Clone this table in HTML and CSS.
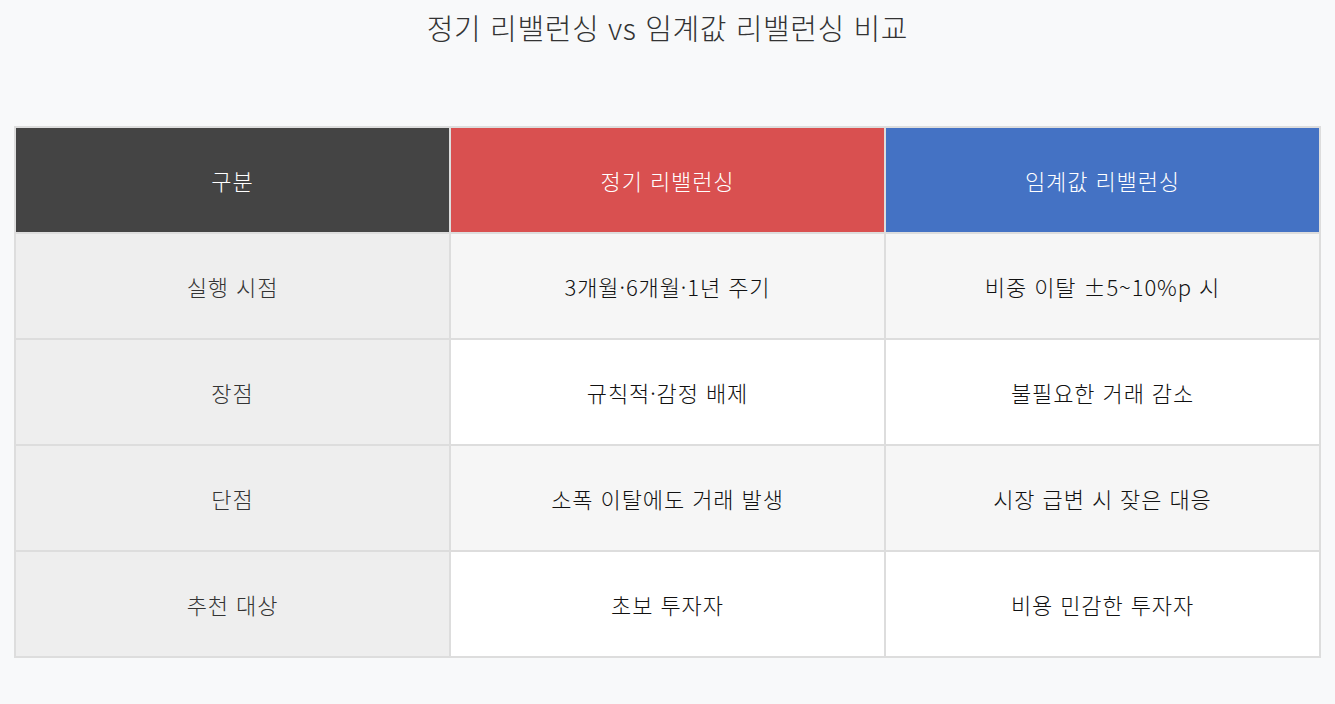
FILE: index.html
```html
<!DOCTYPE html>
<html lang="ko">
<head>
<meta charset="utf-8">
<link rel="stylesheet" href="styles.css">
</head>
<body>
<div class="page">
  <h1 class="title">정기 리밸런싱 vs 임계값 리밸런싱 비교</h1>
  <table class="cmp">
    <thead>
      <tr>
        <th class="h-label">구분</th>
        <th class="h-red">정기 리밸런싱</th>
        <th class="h-blue">임계값 리밸런싱</th>
      </tr>
    </thead>
    <tbody>
      <tr class="odd">
        <td class="label">실행 시점</td>
        <td>3개월·6개월·1년 주기</td>
        <td>비중 이탈 ±5~10%p 시</td>
      </tr>
      <tr>
        <td class="label">장점</td>
        <td>규칙적·감정 배제</td>
        <td>불필요한 거래 감소</td>
      </tr>
      <tr class="odd">
        <td class="label">단점</td>
        <td>소폭 이탈에도 거래 발생</td>
        <td>시장 급변 시 잦은 대응</td>
      </tr>
      <tr>
        <td class="label">추천 대상</td>
        <td>초보 투자자</td>
        <td>비용 민감한 투자자</td>
      </tr>
    </tbody>
  </table>
</div>
</body>
</html>
```
FILE: styles.css
```css
html, body {
  margin: 0;
  padding: 0;
  background: #f8f9fa;
}
body {
  font-family: "Noto Sans CJK KR", "Noto Sans", sans-serif;
  color: #222;
}
.page {
  padding: 8px 14px 0 14px;
}
.title {
  margin: 0;
  font-size: 29px;
  font-weight: 300;
  letter-spacing: 0.6px;
  line-height: 38px;
  color: #333;
  text-align: center;
}
.cmp {
  margin-top: 80px;
  width: 100%;
  border-collapse: collapse;
  table-layout: fixed;
  border: 2px solid #ddd;
}
.cmp th, .cmp td {
  border: 2px solid #ddd;
  text-align: center;
  font-size: 22px;
  font-weight: 300;
  letter-spacing: 0.9px;
  line-height: 30px;
  padding: 37px 10px;
}
.cmp th {
  color: #fff;
}
.h-label { background: #444444; }
.h-red { background: #d95050; }
.h-blue { background: #4472c4; }
.cmp td { background: #fff; color: #111; }
.cmp tr.odd td { background: #f6f6f6; }
.cmp td.label, .cmp tr.odd td.label { background: #eeeeee; color: #333; }
```
